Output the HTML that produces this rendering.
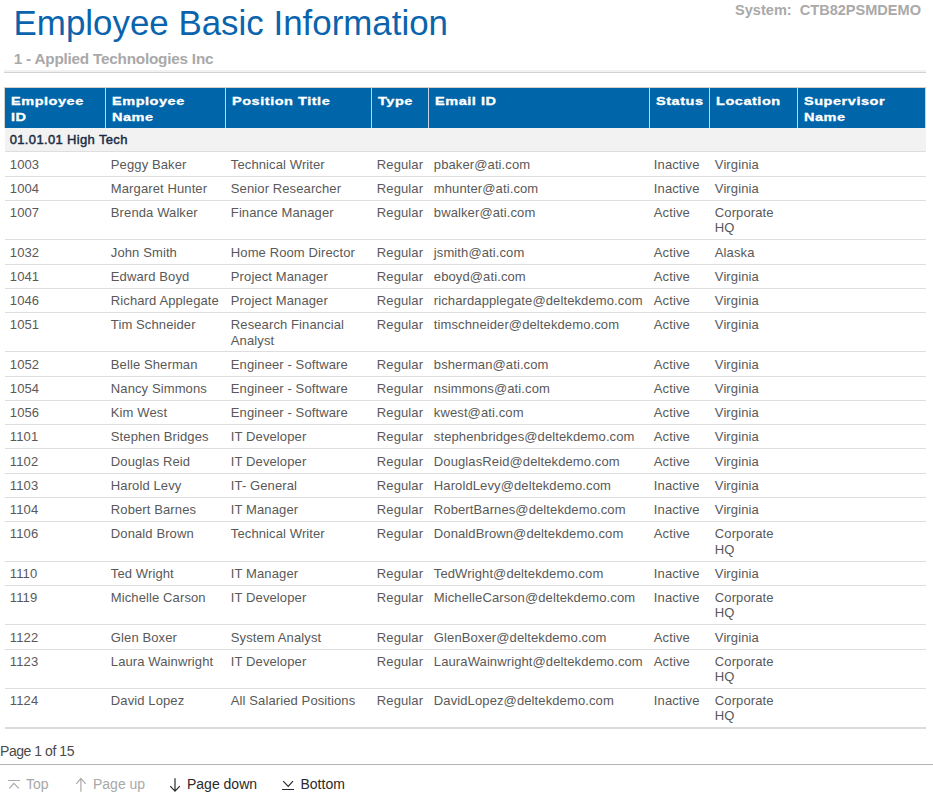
<!DOCTYPE html>
<html><head><meta charset="utf-8">
<style>
html,body{margin:0;padding:0;background:#fff;}
body{width:933px;height:803px;position:relative;overflow:hidden;font-family:"Liberation Sans",sans-serif;}
.title{position:absolute;left:13.6px;top:1px;font-size:34.9px;line-height:44px;color:#0a64ad;white-space:nowrap;}
.sys{position:absolute;right:12px;top:0.7px;font-size:14.55px;font-weight:bold;color:#a9a9a9;white-space:pre;line-height:18px;}
.sub{position:absolute;left:13.8px;top:48.5px;font-size:15.3px;letter-spacing:-0.22px;font-weight:bold;color:#a9a9a9;line-height:20px;white-space:nowrap;}
.rule{position:absolute;left:4px;top:70px;width:922px;height:2px;background:#f1f1f1;border-bottom:1px solid #d2d2d2;}
.hdr{position:absolute;left:4px;top:87px;width:920px;height:40px;background:#0065a9;border:1px solid #d8d0c8;border-bottom:none;}
.hc{position:absolute;top:0;height:40px;box-sizing:border-box;border-left:1px solid #c9d3dd;color:#fff;font-weight:bold;font-size:11px;line-height:16px;padding:4.5px 0 0 6px;letter-spacing:0.4px;-webkit-text-stroke:0.3px #fff;}
.hc:first-child{border-left:none;}
.hc span{display:inline-block;transform:scaleX(1.32);transform-origin:0 0;}
.grp{position:absolute;left:5px;top:128px;width:921px;height:23.4px;background:#f2f2f2;}
.grp span{position:absolute;left:4.7px;top:2.5px;font-size:13px;font-weight:normal;-webkit-text-stroke:0.45px #1a2b44;color:#1a2b44;letter-spacing:0.35px;line-height:18px;white-space:nowrap;}
.r{position:absolute;left:5px;width:921px;box-sizing:border-box;border-top:1px solid #dedede;}
.c{position:absolute;top:0;padding:4.3px 0 0 5px;font-size:13.5px;line-height:15.2px;color:#595959;letter-spacing:0.1px;white-space:nowrap;margin-left:-5px;transform:scaleX(0.965);transform-origin:0 0;}
.bot{position:absolute;left:5px;top:727px;width:921px;height:2px;background:#dcdcdc;}
.pg{position:absolute;left:0;top:742.3px;font-size:14px;line-height:18px;color:#4a4a4a;letter-spacing:-0.45px;}
.pgl{position:absolute;left:0;top:764px;width:933px;height:1px;background:#b4b4b4;}
.nav{position:absolute;top:774px;font-size:14px;line-height:20px;white-space:nowrap;}
.dis{color:#a8a8a8;}
.en{color:#2a2a2a;}
svg{position:absolute;}
</style></head><body>
<div class="title">Employee Basic Information</div>
<div class="sys">System:  CTB82PSMDEMO</div>
<div class="sub">1 - Applied Technologies Inc</div>
<div class="rule"></div>
<div class="hdr"><div class="hc" style="left:0px;width:100px"><span>Employee<br>ID</span></div><div class="hc" style="left:100px;width:120px"><span>Employee<br>Name</span></div><div class="hc" style="left:220px;width:146px"><span>Position Title</span></div><div class="hc" style="left:366px;width:57px"><span>Type</span></div><div class="hc" style="left:423px;width:221px"><span>Email ID</span></div><div class="hc" style="left:644px;width:60px"><span>Status</span></div><div class="hc" style="left:704px;width:88px"><span>Location</span></div><div class="hc" style="left:792px;width:129px"><span>Supervisor<br>Name</span></div></div>
<div class="grp"><span>01.01.01 High Tech</span></div>
<div class="r" style="top:151.40px;height:24.25px"><div class="c" style="left:5px">1003</div><div class="c" style="left:105.5px">Peggy Baker</div><div class="c" style="left:225.7px">Technical Writer</div><div class="c" style="left:372px">Regular</div><div class="c" style="left:428.5px">pbaker@ati.com</div><div class="c" style="left:649px">Inactive</div><div class="c" style="left:709.5px">Virginia</div></div><div class="r" style="top:175.65px;height:24.25px"><div class="c" style="left:5px">1004</div><div class="c" style="left:105.5px">Margaret Hunter</div><div class="c" style="left:225.7px">Senior Researcher</div><div class="c" style="left:372px">Regular</div><div class="c" style="left:428.5px">mhunter@ati.com</div><div class="c" style="left:649px">Inactive</div><div class="c" style="left:709.5px">Virginia</div></div><div class="r" style="top:199.90px;height:39.40px"><div class="c" style="left:5px">1007</div><div class="c" style="left:105.5px">Brenda Walker</div><div class="c" style="left:225.7px">Finance Manager</div><div class="c" style="left:372px">Regular</div><div class="c" style="left:428.5px">bwalker@ati.com</div><div class="c" style="left:649px">Active</div><div class="c" style="left:709.5px">Corporate<br>HQ</div></div><div class="r" style="top:239.30px;height:24.25px"><div class="c" style="left:5px">1032</div><div class="c" style="left:105.5px">John Smith</div><div class="c" style="left:225.7px">Home Room Director</div><div class="c" style="left:372px">Regular</div><div class="c" style="left:428.5px">jsmith@ati.com</div><div class="c" style="left:649px">Active</div><div class="c" style="left:709.5px">Alaska</div></div><div class="r" style="top:263.55px;height:24.25px"><div class="c" style="left:5px">1041</div><div class="c" style="left:105.5px">Edward Boyd</div><div class="c" style="left:225.7px">Project Manager</div><div class="c" style="left:372px">Regular</div><div class="c" style="left:428.5px">eboyd@ati.com</div><div class="c" style="left:649px">Active</div><div class="c" style="left:709.5px">Virginia</div></div><div class="r" style="top:287.80px;height:24.25px"><div class="c" style="left:5px">1046</div><div class="c" style="left:105.5px">Richard Applegate</div><div class="c" style="left:225.7px">Project Manager</div><div class="c" style="left:372px">Regular</div><div class="c" style="left:428.5px">richardapplegate@deltekdemo.com</div><div class="c" style="left:649px">Active</div><div class="c" style="left:709.5px">Virginia</div></div><div class="r" style="top:312.05px;height:39.40px"><div class="c" style="left:5px">1051</div><div class="c" style="left:105.5px">Tim Schneider</div><div class="c" style="left:225.7px">Research Financial<br>Analyst</div><div class="c" style="left:372px">Regular</div><div class="c" style="left:428.5px">timschneider@deltekdemo.com</div><div class="c" style="left:649px">Active</div><div class="c" style="left:709.5px">Virginia</div></div><div class="r" style="top:351.45px;height:24.25px"><div class="c" style="left:5px">1052</div><div class="c" style="left:105.5px">Belle Sherman</div><div class="c" style="left:225.7px">Engineer - Software</div><div class="c" style="left:372px">Regular</div><div class="c" style="left:428.5px">bsherman@ati.com</div><div class="c" style="left:649px">Active</div><div class="c" style="left:709.5px">Virginia</div></div><div class="r" style="top:375.70px;height:24.25px"><div class="c" style="left:5px">1054</div><div class="c" style="left:105.5px">Nancy Simmons</div><div class="c" style="left:225.7px">Engineer - Software</div><div class="c" style="left:372px">Regular</div><div class="c" style="left:428.5px">nsimmons@ati.com</div><div class="c" style="left:649px">Active</div><div class="c" style="left:709.5px">Virginia</div></div><div class="r" style="top:399.95px;height:24.25px"><div class="c" style="left:5px">1056</div><div class="c" style="left:105.5px">Kim West</div><div class="c" style="left:225.7px">Engineer - Software</div><div class="c" style="left:372px">Regular</div><div class="c" style="left:428.5px">kwest@ati.com</div><div class="c" style="left:649px">Active</div><div class="c" style="left:709.5px">Virginia</div></div><div class="r" style="top:424.20px;height:24.25px"><div class="c" style="left:5px">1101</div><div class="c" style="left:105.5px">Stephen Bridges</div><div class="c" style="left:225.7px">IT Developer</div><div class="c" style="left:372px">Regular</div><div class="c" style="left:428.5px">stephenbridges@deltekdemo.com</div><div class="c" style="left:649px">Active</div><div class="c" style="left:709.5px">Virginia</div></div><div class="r" style="top:448.45px;height:24.25px"><div class="c" style="left:5px">1102</div><div class="c" style="left:105.5px">Douglas Reid</div><div class="c" style="left:225.7px">IT Developer</div><div class="c" style="left:372px">Regular</div><div class="c" style="left:428.5px">DouglasReid@deltekdemo.com</div><div class="c" style="left:649px">Active</div><div class="c" style="left:709.5px">Virginia</div></div><div class="r" style="top:472.70px;height:24.25px"><div class="c" style="left:5px">1103</div><div class="c" style="left:105.5px">Harold Levy</div><div class="c" style="left:225.7px">IT- General</div><div class="c" style="left:372px">Regular</div><div class="c" style="left:428.5px">HaroldLevy@deltekdemo.com</div><div class="c" style="left:649px">Inactive</div><div class="c" style="left:709.5px">Virginia</div></div><div class="r" style="top:496.95px;height:24.25px"><div class="c" style="left:5px">1104</div><div class="c" style="left:105.5px">Robert Barnes</div><div class="c" style="left:225.7px">IT Manager</div><div class="c" style="left:372px">Regular</div><div class="c" style="left:428.5px">RobertBarnes@deltekdemo.com</div><div class="c" style="left:649px">Inactive</div><div class="c" style="left:709.5px">Virginia</div></div><div class="r" style="top:521.20px;height:39.40px"><div class="c" style="left:5px">1106</div><div class="c" style="left:105.5px">Donald Brown</div><div class="c" style="left:225.7px">Technical Writer</div><div class="c" style="left:372px">Regular</div><div class="c" style="left:428.5px">DonaldBrown@deltekdemo.com</div><div class="c" style="left:649px">Active</div><div class="c" style="left:709.5px">Corporate<br>HQ</div></div><div class="r" style="top:560.60px;height:24.25px"><div class="c" style="left:5px">1110</div><div class="c" style="left:105.5px">Ted Wright</div><div class="c" style="left:225.7px">IT Manager</div><div class="c" style="left:372px">Regular</div><div class="c" style="left:428.5px">TedWright@deltekdemo.com</div><div class="c" style="left:649px">Inactive</div><div class="c" style="left:709.5px">Virginia</div></div><div class="r" style="top:584.85px;height:39.40px"><div class="c" style="left:5px">1119</div><div class="c" style="left:105.5px">Michelle Carson</div><div class="c" style="left:225.7px">IT Developer</div><div class="c" style="left:372px">Regular</div><div class="c" style="left:428.5px">MichelleCarson@deltekdemo.com</div><div class="c" style="left:649px">Inactive</div><div class="c" style="left:709.5px">Corporate<br>HQ</div></div><div class="r" style="top:624.25px;height:24.25px"><div class="c" style="left:5px">1122</div><div class="c" style="left:105.5px">Glen Boxer</div><div class="c" style="left:225.7px">System Analyst</div><div class="c" style="left:372px">Regular</div><div class="c" style="left:428.5px">GlenBoxer@deltekdemo.com</div><div class="c" style="left:649px">Active</div><div class="c" style="left:709.5px">Virginia</div></div><div class="r" style="top:648.50px;height:39.40px"><div class="c" style="left:5px">1123</div><div class="c" style="left:105.5px">Laura Wainwright</div><div class="c" style="left:225.7px">IT Developer</div><div class="c" style="left:372px">Regular</div><div class="c" style="left:428.5px">LauraWainwright@deltekdemo.com</div><div class="c" style="left:649px">Active</div><div class="c" style="left:709.5px">Corporate<br>HQ</div></div><div class="r" style="top:687.90px;height:39.40px"><div class="c" style="left:5px">1124</div><div class="c" style="left:105.5px">David Lopez</div><div class="c" style="left:225.7px">All Salaried Positions</div><div class="c" style="left:372px">Regular</div><div class="c" style="left:428.5px">DavidLopez@deltekdemo.com</div><div class="c" style="left:649px">Inactive</div><div class="c" style="left:709.5px">Corporate<br>HQ</div></div>
<div class="bot"></div>
<div class="pg">Page 1 of 15</div>
<div class="pgl"></div>
<svg style="left:0;top:770px" width="360" height="30" viewBox="0 770 360 30">
<g fill="none" stroke-width="1.2">
<path d="M8 780.5H20M9.4 788.4L13.9 783.4L18.8 788.4" stroke="#aaa"/>
<path d="M80.9 778.4V791.8M76.3 783.8L80.9 778.4L85.7 783.8" stroke="#aaa"/>
<path d="M175 778.2V791M170.2 786.2L175 791.2L179.8 786.2" stroke="#2a2a2a"/>
<path d="M282 789.5H294M283.2 781.2L288.2 786.3L293 781.2" stroke="#2a2a2a"/>
</g></svg>
<div class="nav dis" style="left:26px">Top</div>
<div class="nav dis" style="left:93px">Page up</div>
<div class="nav en" style="left:187px">Page down</div>
<div class="nav en" style="left:300.5px">Bottom</div>
</body></html>
